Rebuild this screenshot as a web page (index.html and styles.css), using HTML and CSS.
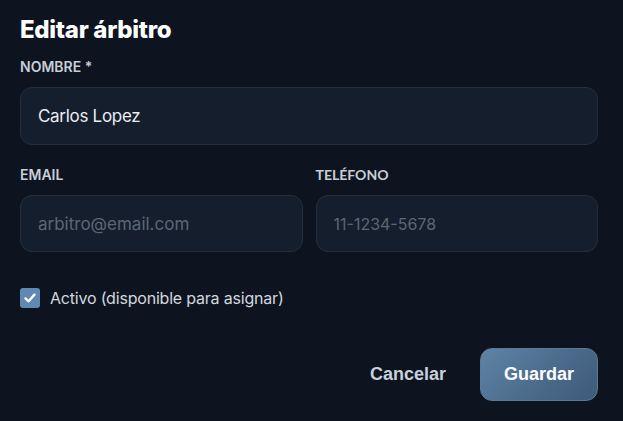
FILE: index.html
```html
<!DOCTYPE html>
<html lang="es">
<head>
  <meta charset="UTF-8">
  <title>Editar árbitro</title>
  <link rel="stylesheet" href="styles.css">
</head>
<body>
  <div class="modal">
    <h1>Editar árbitro</h1>
    <div class="field">
      <label for="nombre">NOMBRE *</label>
      <input id="nombre" class="input filled" type="text" value="Carlos Lopez">
    </div>
    <div class="row">
      <div class="field">
        <label for="email">EMAIL</label>
        <input id="email" class="input" type="text" placeholder="arbitro@email.com">
      </div>
      <div class="field">
        <label for="telefono" class="alt">TELÉFONO</label>
        <input id="telefono" class="input" type="text" placeholder="11-1234-5678">
      </div>
    </div>
    <label class="check">
      <span class="box">
        <svg width="14" height="14" viewBox="0 0 14 14"><path d="M2.5 7.4 L5.6 10.3 L11.5 3.6" fill="none" stroke="#fff" stroke-width="2.4" stroke-linecap="round" stroke-linejoin="round"/></svg>
      </span>
      Activo (disponible para asignar)
    </label>
    <div class="actions">
      <button class="btn-link">Cancelar</button>
      <button class="btn-primary">Guardar</button>
    </div>
  </div>
</body>
</html>
```

FILE: styles.css
```css
body {
  margin: 0;
  background-color: #0d1420;
  font-family: 'Inter', 'Noto Sans', sans-serif;
  color: #e5e9ef;
}
.modal {
  padding: 14px 25px 20px 20px;
}
h1 {
  margin: 0 0 13px;
  font-size: 24px;
  font-weight: 800;
  letter-spacing: -0.3px;
  color: #ffffff;
  line-height: 32px;
}
.field {
  display: flex;
  flex-direction: column;
  flex: 1;
  min-width: 0;
}
.field label {
  font-size: 14px;
  font-weight: 600;
  color: #c9ced6;
  line-height: 16px;
  margin-bottom: 12px;
}
.field label.alt {
  font-family: 'Lato', sans-serif;
  font-weight: 700;
  font-size: 14px;
}
.input {
  box-sizing: border-box;
  width: 100%;
  min-width: 0;
  height: 58px;
  padding: 0 17px;
  background-color: #151e2d;
  border: 1px solid #242e3d;
  border-radius: 12px;
  font-family: 'Inter', sans-serif;
  font-size: 17px;
  color: #e9edf2;
  outline: none;
}
.input::placeholder {
  color: #5b6675;
}
#telefono {
  font-size: 16px;
}
.input.filled {
  letter-spacing: -0.3px;
}
.row {
  display: flex;
  gap: 13px;
  margin-top: 22px;
}
.row .input {
  height: 57px;
}
.check {
  display: flex;
  align-items: center;
  gap: 10px;
  margin-top: 36px;
  font-size: 16px;
  letter-spacing: -0.2px;
  color: #d3d8df;
}
.box {
  width: 20px;
  height: 20px;
  border-radius: 3px;
  background-color: #5f88b3;
  display: flex;
  align-items: center;
  justify-content: center;
}
.actions {
  display: flex;
  justify-content: flex-end;
  align-items: center;
  gap: 34px;
  margin-top: 40px;
}
.btn-link {
  background: none;
  border: none;
  padding: 0;
  font-family: 'Liberation Sans', Arial, sans-serif;
  font-weight: 700;
  font-size: 18px;
  color: #c9d0d9;
  cursor: pointer;
}
.btn-primary {
  width: 118px;
  height: 53px;
  border: 1px solid #5b7a98;
  border-radius: 12px;
  background: linear-gradient(135deg, #5e84a6 0%, #4b6b8c 55%, #3e5a79 100%);
  font-family: 'Liberation Sans', Arial, sans-serif;
  font-weight: 700;
  font-size: 18px;
  color: #ffffff;
  cursor: pointer;
}
```
